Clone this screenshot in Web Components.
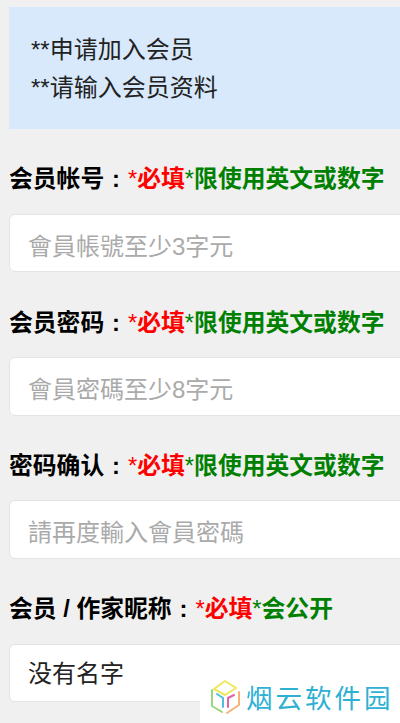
<!DOCTYPE html>
<html lang="zh">
<head>
<meta charset="utf-8">
<title>申请加入会员</title>
<style>
  html, body { margin: 0; height: 723px; overflow: hidden; background: #f0f0f0; }
  body {
    font-family: "Liberation Sans", "Noto Sans CJK SC", sans-serif;
    color: #222;
    position: relative;
  }
  .form { display: flex; flex-direction: column; padding: 7px 0 0 9px; width: 460px; }
</style>
</head>
<body>
<div class="form">
  <notice-panel>
    <div>**申请加入会员</div>
    <div>**请输入会员资料</div>
  </notice-panel>
  <member-field>
    <span slot="label">会员帐号</span>
    <span slot="req">必填</span>
    <span slot="hint">限使用英文或数字</span>
    會員帳號至少3字元
  </member-field>
  <member-field>
    <span slot="label">会员密码</span>
    <span slot="req">必填</span>
    <span slot="hint">限使用英文或数字</span>
    會員密碼至少8字元
  </member-field>
  <member-field>
    <span slot="label">密码确认</span>
    <span slot="req">必填</span>
    <span slot="hint">限使用英文或数字</span>
    請再度輸入會員密碼
  </member-field>
  <member-field filled>
    <span slot="label">会员 / 作家昵称</span>
    <span slot="req">必填</span>
    <span slot="hint">会公开</span>
    没有名字
  </member-field>
</div>
<site-watermark></site-watermark>

<script>
// Blue notice box at the top of the form
class NoticePanel extends HTMLElement {
  constructor() {
    super();
    this.attachShadow({ mode: 'open' });
    this.shadowRoot.innerHTML = `
      <style>
        :host {
          display: block;
          box-sizing: border-box;
          height: 122px;
          padding: 24px 22px 22px;
          background: #d8e9fb;
          font-size: 24px;
          line-height: 38px;
          color: #222;
        }
      </style>
      <slot></slot>
    `;
  }
}

// Label line plus a text box, the box runs off the right edge
class MemberField extends HTMLElement {
  constructor() {
    super();
    this.attachShadow({ mode: 'open' });
    this.shadowRoot.innerHTML = `
      <style>
        :host {
          display: block;
          margin-top: 33.3px;
        }
        .label {
          display: block;
          font-size: 23.8px;
          line-height: 34px;
          font-weight: 700;
          color: #000;
          white-space: nowrap;
        }
        .colon { display: inline-block; width: 1em; text-align: center; }
        .star { font-weight: 400; }
        .req { color: #f00; }
        .hint { color: #008000; }
        .box {
          box-sizing: border-box;
          height: 58.5px;
          margin-top: 17.5px;
          padding: 2px 0 0 18px;
          display: flex;
          align-items: center;
          background: #fff;
          border: 1.5px solid #e4e4e4;
          border-radius: 6px;
          font-size: 24px;
          color: #aaa;
        }
        :host([filled]) .box { color: #222; padding: 0 0 3px 18px; }
      </style>
      <div class="label"><slot name="label"></slot><span class="colon">:</span><span class="req"><span class="star">*</span><slot name="req"></slot></span><span class="hint"><span class="star">*</span><slot name="hint"></slot></span></div>
      <div class="box"><slot></slot></div>
    `;
  }
}

// Site logo stamped over the bottom right corner
class SiteWatermark extends HTMLElement {
  constructor() {
    super();
    this.attachShadow({ mode: 'open' });
    this.shadowRoot.innerHTML = `
      <style>
        :host {
          position: absolute;
          left: 200px;
          top: 671px;
          width: 200px;
          height: 52px;
          display: flex;
          align-items: center;
          gap: 5px;
          padding-left: 9px;
          box-sizing: border-box;
          background: #fff;
          color: #2eb0d3;
          font-size: 26.5px;
          letter-spacing: 3px;
          white-space: nowrap;
        }
        svg { flex: none; margin-top: -1px; }
        span { margin-top: -1px; }
      </style>
      <svg width="32" height="36" viewBox="0 0 32 36" fill="none" stroke-width="2" stroke-linecap="round" stroke-linejoin="round">
        <path d="M5 10 L16 2 L27 9 L16 16 Z" stroke="#f0e75a"/>
        <path d="M3 11 L3 27 L13 33" stroke="#9bd67a"/>
        <path d="M30 13 L30 26 L18 34" stroke="#f5b27a"/>
        <path d="M8 15 L14 19 L14 28" stroke="#4ebfe0"/>
        <path d="M25 16 L19 19 L19 28" stroke="#e85fa8"/>
      </svg>
      <span>烟云软件园</span>
    `;
  }
}

customElements.define('notice-panel', NoticePanel);
customElements.define('member-field', MemberField);
customElements.define('site-watermark', SiteWatermark);
</script>
</body>
</html>
